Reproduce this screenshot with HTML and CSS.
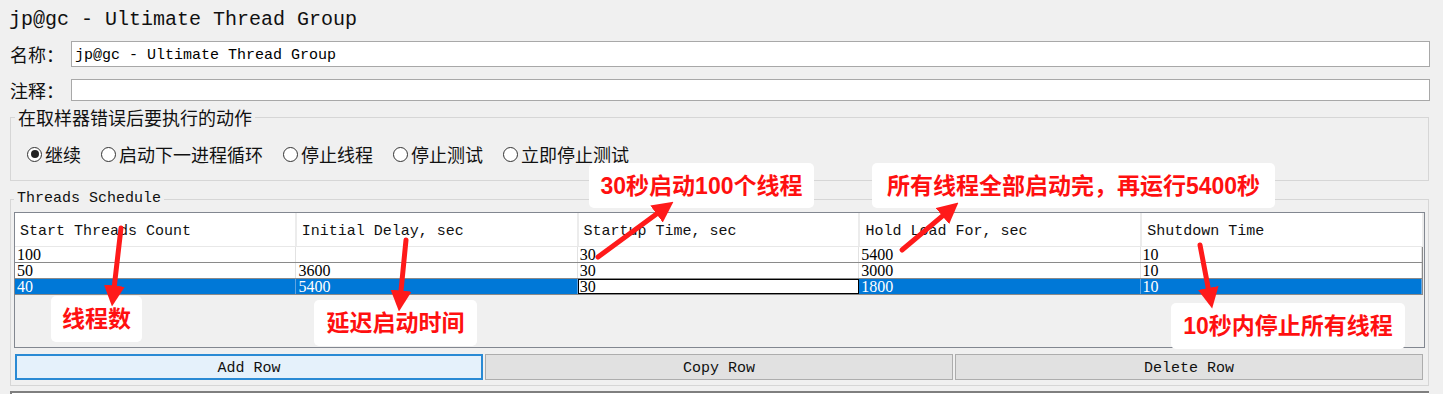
FILE: index.html
```html
<!DOCTYPE html>
<html>
<head>
<meta charset="utf-8">
<link rel="stylesheet" href="styles.css">
</head>
<body>
<div class="page">
  <div class="title">jp@gc - Ultimate Thread Group</div>
  <div class="field f1"><span class="lbl">名称：</span><input class="inp" value="jp@gc - Ultimate Thread Group"></div>
  <div class="field f2"><span class="lbl">注释：</span><input class="inp" value=""></div>

  <div class="group g1">
    <div class="legend cjk">在取样器错误后要执行的动作</div>
    <div class="radios">
      <span class="opt"><span class="radio on"></span>继续</span>
      <span class="opt"><span class="radio"></span>启动下一进程循环</span>
      <span class="opt"><span class="radio"></span>停止线程</span>
      <span class="opt"><span class="radio"></span>停止测试</span>
      <span class="opt"><span class="radio"></span>立即停止测试</span>
    </div>
  </div>

  <div class="group g2">
    <div class="legend mono">Threads Schedule</div>
    <div class="table">
      <div class="thead">
        <div class="th">Start Threads Count</div>
        <div class="th">Initial Delay, sec</div>
        <div class="th">Startup Time, sec</div>
        <div class="th">Hold Load For, sec</div>
        <div class="th">Shutdown Time</div>
      </div>
      <div class="trow">
        <div class="td">100</div><div class="td"></div><div class="td">30</div><div class="td">5400</div><div class="td">10</div>
      </div>
      <div class="trow">
        <div class="td">50</div><div class="td">3600</div><div class="td">30</div><div class="td">3000</div><div class="td">10</div>
      </div>
      <div class="trow sel">
        <div class="td">40</div><div class="td">5400</div><div class="td edit">30</div><div class="td">1800</div><div class="td">10</div>
      </div>
    </div>
    <div class="buttons">
      <div class="btn focus">Add Row</div>
      <div class="btn">Copy Row</div>
      <div class="btn">Delete Row</div>
    </div>
  </div>
  <div class="lower"></div>

  <div class="note n1">30秒启动100个线程</div>
  <div class="note n2">所有线程全部启动完，再运行5400秒</div>
  <div class="note n3">线程数</div>
  <div class="note n4">延迟启动时间</div>
  <div class="note n5">10秒内停止所有线程</div>

  <svg class="arrows" width="1443" height="394" viewBox="0 0 1443 394">
    <defs>
      <marker id="ah" markerUnits="userSpaceOnUse" markerWidth="21" markerHeight="21" viewBox="0 0 20 20" refX="8" refY="10" orient="auto">
        <path d="M0,0 L20,10 L0,20 z" fill="#ff1a1a"/>
      </marker>
    </defs>
    <g stroke="#ff1a1a" stroke-width="5" stroke-linecap="round" fill="none" marker-end="url(#ah)">
      <line x1="121" y1="228" x2="113.4" y2="294"/>
      <line x1="406" y1="240" x2="400.2" y2="299"/>
      <line x1="598" y1="257" x2="663.3" y2="209.1"/>
      <line x1="902" y1="250" x2="948.8" y2="210.7"/>
      <line x1="1200" y1="245" x2="1209.8" y2="296.2"/>
    </g>
  </svg>
</div>
</body>
</html>
```

FILE: styles.css
```css
html, body {
  margin: 0;
  padding: 0;
  background: #f0f0f0;
}

.page {
  position: relative;
  width: 1443px;
  height: 394px;
  overflow: hidden;
  background: #f0f0f0;
  color: #000;
  font-family: "Liberation Mono", monospace;
}

.title {
  height: 40px;
  line-height: 40px;
  padding-left: 9px;
  font-size: 20px;
  color: #111;
  font-family: "Liberation Mono", monospace;
}

.field {
  display: flex;
  align-items: center;
  margin-right: 13px;
}

.f1 {
  margin-top: 1px;
  height: 26px;
}

.f2 {
  margin-top: 12px;
  height: 22px;
}

.lbl {
  width: 61px;
  padding-left: 10px;
  font-family: "Noto Sans CJK SC", sans-serif;
  font-size: 18px;
  line-height: 22px;
  color: #111;
}

.inp {
  flex: 1;
  height: 100%;
  box-sizing: border-box;
  margin: 0;
  border: 1px solid #a8a8a8;
  background: #fff;
  padding: 2px 3px 0 3px;
  font-family: "Liberation Mono", monospace;
  font-size: 15px;
  color: #000;
  outline: none;
}

.group {
  margin: 0 14px 0 10px;
  border: 1px solid #d6d6d6;
}

.g1 {
  margin-top: 16px;
  padding: 0 0 15px 16px;
}

.g2 {
  margin-top: 18px;
  padding: 0 3px 5px 3px;
}

.legend {
  display: block;
  width: max-content;
  margin: -11px 0 0 0;
  padding: 0 3px;
  background: #f0f0f0;
  line-height: 20px;
  color: #111;
}

.g1 .legend {
  margin-left: -12px;
}

.cjk {
  font-family: "Noto Sans CJK SC", sans-serif;
  font-size: 18px;
}

.mono {
  font-family: "Liberation Mono", monospace;
  font-size: 15px;
}

.radios {
  display: flex;
  align-items: center;
  gap: 20px;
  margin-top: 16px;
  height: 22px;
  font-family: "Noto Sans CJK SC", sans-serif;
  font-size: 18px;
  color: #111;
}

.opt {
  display: flex;
  align-items: center;
  gap: 3px;
  line-height: 22px;
}

.radio {
  width: 13px;
  height: 13px;
  border: 1px solid #333;
  border-radius: 50%;
  background: #fff;
  display: flex;
  align-items: center;
  justify-content: center;
}

.radio.on::after {
  content: "";
  width: 8px;
  height: 8px;
  border-radius: 50%;
  background: #222;
}

.table {
  margin-top: 3px;
  height: 134px;
  border: 1px solid #828790;
  background: #f0f0f0;
}

.thead,
.trow {
  display: grid;
  grid-template-columns: repeat(5, 1fr);
  background: #fff;
}

.thead {
  height: 33px;
  border-bottom: 1px solid #e8e8e8;
}

.th {
  border-right: 2px solid #ececec;
  padding: 4px 0 0 5px;
  font-size: 15px;
  line-height: 29px;
  white-space: nowrap;
  overflow: hidden;
  color: #111;
}

.trow {
  height: 15px;
  border-bottom: 1px solid #8a8a8a;
  margin-right: 1px;
  border-right: 1px solid #8a8a8a;
}

.td {
  border-right: 1px solid #e2e2e2;
  padding-left: 2px;
  font-family: "Liberation Serif", serif;
  font-size: 16px;
  line-height: 15px;
  height: 15px;
  color: #000;
}

.trow.sel {
  background: #0078d7;
}

.trow.sel .td {
  color: #fff;
  border-right-color: #5fa3e0;
}

.trow.sel .td.edit {
  background: #fff;
  color: #000;
  box-sizing: border-box;
  border: 1px solid #000;
  padding-left: 1px;
  line-height: 13px;
}

.buttons {
  display: grid;
  grid-template-columns: repeat(3, 1fr);
  gap: 2px;
  margin: 6px 2px 0 1px;
}

.btn {
  height: 26px;
  box-sizing: border-box;
  border: 1px solid #adadad;
  background: #e1e1e1;
  text-align: center;
  padding-top: 4px;
  line-height: 20px;
  font-size: 15px;
  color: #111;
}

.btn.focus {
  border: 2px solid #2a8ad4;
  background: #e5f1fb;
  padding-top: 3px;
  line-height: 19px;
}

.lower {
  margin: 5px 14px 0 10px;
  height: 10px;
  border-top: 2px solid #7f7f7f;
  border-left: 2px solid #7f7f7f;
  background: #fff;
}

.note {
  position: absolute;
  display: flex;
  align-items: center;
  justify-content: center;
  background: #fff;
  border-radius: 5px;
  color: #ff1010;
  font-family: "Liberation Sans", "Noto Sans CJK SC", sans-serif;
  font-weight: 700;
  font-size: 23px;
  line-height: 30px;
  white-space: nowrap;
}

.n1 { left: 589px; top: 163px; width: 225px; height: 45px; }
.n2 { left: 872px; top: 163px; width: 403px; height: 45px; }
.n3 { left: 51px; top: 296px; width: 91px; height: 46px; }
.n4 { left: 314px; top: 300px; width: 163px; height: 46px; }
.n5 { left: 1171px; top: 303px; width: 234px; height: 46px; }

.arrows {
  position: absolute;
  left: 0;
  top: 0;
  pointer-events: none;
}
```
